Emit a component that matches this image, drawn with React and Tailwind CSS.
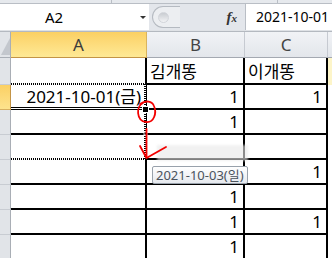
const rows = [
  { n: 1, h: "h-[27px]", b: "김개똥", c: "이개똥", left: true },
  { n: 2, h: "h-[25px]", a: "2021-10-01(금)", b: "1", c: "1" },
  { n: 3, h: "h-[25px]", b: "1" },
  { n: 4, h: "h-[25px]" },
  { n: 5, h: "h-[25px]", c: "1" },
  { n: 6, h: "h-[25px]", b: "1" },
  { n: 7, h: "h-[25px]", b: "1", c: "1" },
  { n: 8, h: "h-[25px]", b: "1" },
];

const Cell = ({ w, children, left }) => (
  <div
    className={`${w} h-full shrink-0 border-r-2 border-b-2 border-black flex items-end pb-[3px] leading-[17px] text-[17px] text-black whitespace-nowrap overflow-visible ${
      left ? "justify-start pl-[3px]" : "justify-end pr-[4px]"
    }`}
  >
    {children}
  </div>
);

const ColHead = ({ w, label, active }) => (
  <div
    className={`${w} h-full shrink-0 flex items-center justify-center text-[17px] border-r ${
      active
        ? "bg-gradient-to-b from-[#fbd063] to-[#fee995] border-r-[#d9b45e] border-b border-b-[#c39446] text-[#3c3c3c]"
        : "bg-gradient-to-b from-[#f1f3f6] to-[#e3e6eb] border-r-[#c6cad1] border-b border-b-[#a4a9b1] text-[#444]"
    }`}
  >
    {label}
  </div>
);

export default function App() {
  return (
    <div className="relative w-[332px] h-[258px] overflow-hidden bg-white font-['Noto_Sans','Noto_Sans_CJK_KR',sans-serif]">
      {/* ribbon edge */}
      <div className="h-[4px] flex bg-[#e6e9ed] border-b border-[#b9bec5]">
        <div className="w-[112px] border-r border-[#b9bec5]" />
        <div className="w-[166px] border-r border-[#b9bec5]" />
      </div>

      {/* name box + formula bar */}
      <div className="h-[26px] flex bg-[#e3e6eb]">
        <div className="w-[149px] bg-white flex items-center relative">
          <span className="pl-[45px] text-[15px] text-black leading-none">A2</span>
          <span className="absolute left-[140px] top-[12px] w-0 h-0 border-l-[3px] border-r-[3px] border-t-[3px] border-l-transparent border-r-transparent border-t-[#333]" />
        </div>
        <div className="w-[96px] flex items-center relative">
          <div className="ml-[3px] w-[28px] h-[22px] rounded-l-full border-l border-t border-b border-[#b5bac1] bg-[#eceef1] flex items-center pl-[5px]">
            <div className="w-[11px] h-[11px] rounded-full bg-gradient-to-b from-[#c9ccd1] to-[#f2f3f5] border border-[#d2d5da]" />
          </div>
          <span className="ml-auto mr-[8px] font-['Liberation_Serif',serif] italic font-bold text-[15px] text-[#333] leading-none">
            f<span className="text-[11px]">x</span>
          </span>
        </div>
        <div className="flex-1 bg-white border-l border-[#b9bec5] flex items-center pl-[10px] text-[14px] text-black whitespace-nowrap leading-none">
          2021-10-01
        </div>
      </div>
      <div className="h-[2px] bg-[#dfe2e6] border-b border-[#b4b9c0]" />

      {/* column headers */}
      <div className="h-[26px] flex">
        <div className="w-[11px] h-full shrink-0 bg-[#e1e4e8] border-r border-b border-[#a9aeb5] relative">
          <svg className="absolute left-[1px] top-[6px]" width="9" height="17" viewBox="0 0 9 17">
            <polygon points="9,0 9,17 0,17" fill="#c3c7cd" />
          </svg>
        </div>
        <ColHead w="w-[136px]" label="A" active />
        <ColHead w="w-[98px]" label="B" />
        <ColHead w="w-[83px]" label="C" />
        <div className="flex-1 h-full bg-gradient-to-b from-[#f1f3f6] to-[#e3e6eb] border-b border-[#a4a9b1]" />
      </div>

      {/* rows */}
      {rows.map((r) => (
        <div key={r.n} className={`${r.h} flex`}>
          <div
            className={`w-[11px] h-full shrink-0 border-r border-b ${
              r.n === 2
                ? "bg-gradient-to-b from-[#fbd063] to-[#fde38d] border-r-[#c39446] border-b-[#d7b060]"
                : "bg-[#e1e4e8] border-r-[#a9aeb5] border-b-[#c8ccd2]"
            }`}
          />
          <Cell w="w-[136px]">{r.a}</Cell>
          <Cell w="w-[98px]" left={r.left}>
            {r.b}
          </Cell>
          <Cell w="w-[83px]" left={r.left}>
            {r.c}
          </Cell>
          <div className={`flex-1 h-full ${r.n === 1 ? "bg-[#fdf5c9]" : "bg-white"}`} />
        </div>
      ))}

      {/* drag ghost */}
      <div className="absolute left-[157px] top-[145px] w-[91px] h-[16px] bg-[#e9e9e9] opacity-60 blur-[1px]" />

      {/* autofill tooltip */}
      <div className="absolute left-[152px] top-[166px] h-[18px] px-[3px] flex items-center rounded-[2px] border border-[#98a1ab] bg-gradient-to-b from-white to-[#e6e9ee] text-[13px] leading-none text-[#4b535d] whitespace-nowrap">
        2021-10-03(일)
      </div>

      {/* marquee, fill handle and red annotation */}
      <svg className="absolute left-0 top-0 pointer-events-none" width="332" height="258" viewBox="0 0 332 258">
        <g strokeWidth="2" fill="none">
          <path d="M11 84H146M11 159H146M145 84V159" stroke="#fff" />
          <path d="M11 84H146M11 159H146M145 84V159" stroke="#000" strokeDasharray="1 1" />
        </g>
        <rect x="11" y="107" width="134" height="1" fill="#000" />
        <rect x="11" y="108" width="134" height="1" fill="#fff" />
        <rect x="142.5" y="106.5" width="6" height="6" fill="#000" stroke="#fff" strokeWidth="1" />
        <rect x="144" y="132" width="3" height="3" fill="#000" stroke="#fff" strokeWidth="0.8" />
        <g stroke="#f20000" strokeWidth="1.8" fill="none" strokeLinecap="round" strokeLinejoin="round">
          <path d="M143 103 C136 106 136 121 146 122 C154 123 157 113 154 106 C152 101 146 100 140 104" />
          <path d="M146.5 129 L146.5 157" />
          <path d="M140 146 L146.5 158 L166 147" />
        </g>
      </svg>
    </div>
  );
}
